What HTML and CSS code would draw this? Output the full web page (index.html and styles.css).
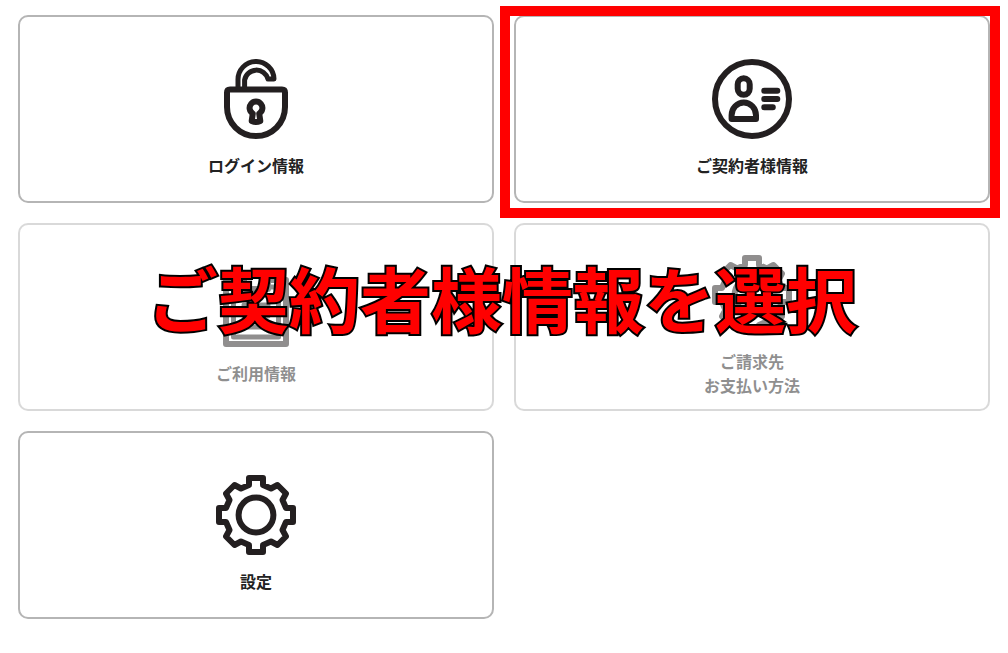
FILE: index.html
```html
<!DOCTYPE html>
<html lang="ja">
<head>
  <meta charset="UTF-8" />
  <meta name="viewport" content="width=device-width, initial-scale=1.0"/>
  <title>ご契約者様情報</title>
  <link rel="stylesheet" href="styles.css">
</head>
<body>
<main class="menu">
  <button class="card" type="button">
    <svg class="icon" viewBox="0 0 80 80" aria-hidden="true">
      <path d="M14 30.5H66Q69 30.5 69 33.5V48A29 29 0 0 1 11 48V33.5Q11 30.5 14 30.5Z"/>
      <path d="M22 30V21A18 18 0 0 1 58 20H52A12 12 0 0 0 28.6 21V30" stroke-width="5"/>
      <path d="M36.8 54.5A6.4 6.4 0 1 1 43.2 54.5L44.3 62Q40 64 35.7 62Z"/>
    </svg>
    <span class="label">ログイン情報</span>
  </button>

  <button class="card selected" type="button">
    <svg class="icon" viewBox="0 0 80 80" aria-hidden="true">
      <circle cx="40" cy="40" r="37"/>
      <rect x="25.7" y="19.3" width="12" height="16.5" rx="6"/>
      <path d="M19.6 60V56.3A12.2 12.8 0 0 1 44 56.3V60Z"/>
      <path d="M52.3 31.7H65.3M52.3 40H65.3M52.3 48.2H60.8"/>
    </svg>
    <span class="label">ご契約者様情報</span>
  </button>

  <button class="card" type="button" disabled>
    <svg class="icon" viewBox="0 0 80 80" aria-hidden="true">
      <path d="M28 13H10V77H70V13H52"/>
      <path d="M28 20H17.5V70H62.5V20H52" stroke-width="5"/>
      <path d="M28 22V10H34A6 6 0 0 1 46 10H52V22Z"/>
      <path d="M28 38H52M28 49H52M28 60H52" stroke-width="5"/>
    </svg>
    <span class="label">ご利用情報</span>
  </button>

  <button class="card" type="button" disabled>
    <svg class="icon" viewBox="0 0 80 80" aria-hidden="true">
      <path d="M33 3H47V10L55 13.5L61.5 10L70 18.5L66.5 25L70 33H77V47H70L66.5 55L70 61.5L61.5 70L55 66.5L47 70V77H33V70L25 66.5L18.5 70L10 61.5L13.5 55L10 47H3V33H10L13.5 25L10 18.5L18.5 10L25 13.5L33 10Z"/>
      <circle cx="40" cy="40" r="17.4"/>
    </svg>
    <span class="label">ご請求先<br>お支払い方法</span>
  </button>

  <button class="card" type="button">
    <svg class="icon" viewBox="0 0 80 80" aria-hidden="true">
      <path d="M33 3H47V10L55 13.5L61.5 10L70 18.5L66.5 25L70 33H77V47H70L66.5 55L70 61.5L61.5 70L55 66.5L47 70V77H33V70L25 66.5L18.5 70L10 61.5L13.5 55L10 47H3V33H10L13.5 25L10 18.5L18.5 10L25 13.5L33 10Z"/>
      <circle cx="40" cy="40" r="17.4"/>
    </svg>
    <span class="label">設定</span>
  </button>

  <p class="caption">ご契約者様情報を選択</p>
</main>
</body>
</html>
```
FILE: styles.css
```css
* {
  box-sizing: border-box;
}

body {
  margin: 0;
  background: #fff;
  color: #222;
  font-family: "Noto Sans CJK JP", sans-serif;
}

.menu {
  position: relative;
  display: grid;
  grid-template-columns: 1fr 1fr;
  grid-auto-rows: minmax(188px, auto);
  gap: 20px;
  padding: 15px 18px;
}

.card {
  position: relative;
  display: flex;
  flex-direction: column;
  align-items: center;
  justify-content: center;
  gap: 14px;
  padding: 18px 0 0;
  border: 2px solid #b5b5b5;
  border-radius: 10px;
  background: #fff;
  color: inherit;
  font-family: inherit;
  cursor: pointer;
}

.card:disabled {
  opacity: 0.5;
  cursor: default;
}

.icon {
  width: 80px;
  height: 80px;
  fill: none;
  stroke: #231f20;
  stroke-width: 6;
  stroke-linecap: round;
  stroke-linejoin: round;
}

.label {
  font-size: 16px;
  font-weight: 700;
  line-height: 24px;
  text-align: center;
}

/* red frame around the item to choose */
.selected::after {
  content: "";
  position: absolute;
  inset: -11px -12px -17px -16px;
  border: 10px solid #f00;
}

.caption {
  position: absolute;
  top: 258px;
  left: 0;
  right: 4px;
  margin: 0;
  color: #f00;
  font-size: 71px;
  font-weight: 700;
  line-height: 76px;
  text-align: center;
  white-space: nowrap;
  -webkit-text-stroke: 4px #000;
  paint-order: stroke fill;
  pointer-events: none;
}
```
